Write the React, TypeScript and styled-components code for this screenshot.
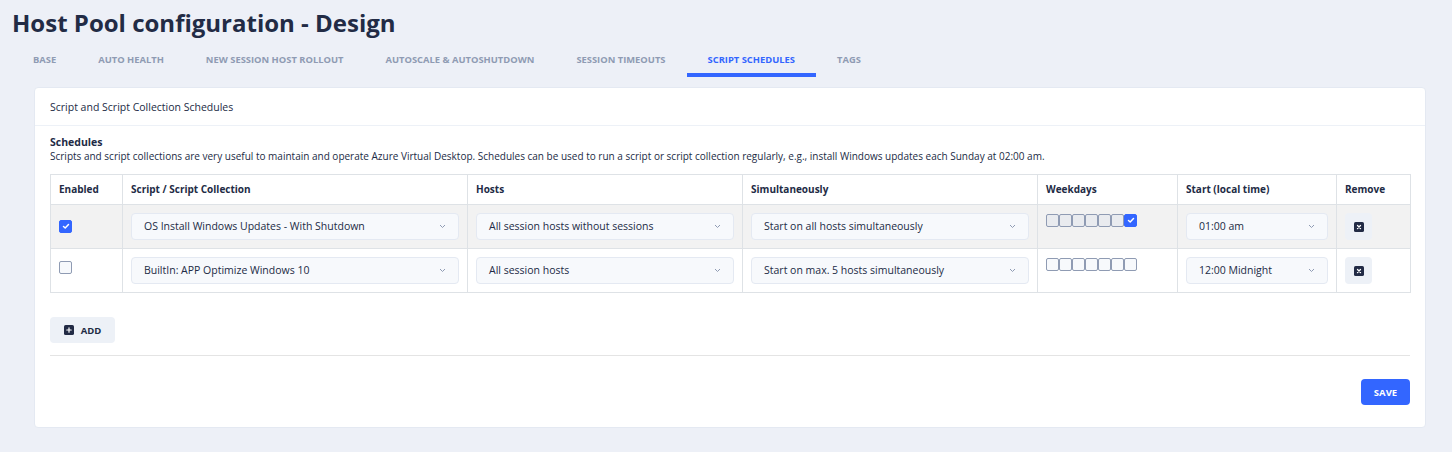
import React from "react";
import styled, { createGlobalStyle } from "styled-components";

const Global = createGlobalStyle`
  html, body { margin: 0; padding: 0; background: #edf0f7; }
  body { font-family: "Open Sans", "Noto Sans", sans-serif; color: #222b45; }
  * { box-sizing: border-box; }
`;

const Page = styled.div`
  width: 1452px;
  height: 452px;
  padding: 8px 26px 0 12px;
  background: #edf0f7;
`;

const Title = styled.h1`
  margin: 0;
  font-size: 24px;
  line-height: 30px;
  font-weight: 700;
  color: #222b45;
  letter-spacing: 0;
`;

const Tabs = styled.nav`
  display: flex;
  margin-top: 6px;
  height: 33px;
`;

const Tab = styled.div<{ $active?: boolean }>`
  padding: 0 21px;
  display: flex;
  align-items: center;
  font-size: 9.4px;
  font-weight: 700;
  text-transform: uppercase;
  color: ${(p) => (p.$active ? "#3366ff" : "#8f9bb3")};
  border-bottom: 4px solid ${(p) => (p.$active ? "#3366ff" : "transparent")};
  padding-top: 1px;
`;

const Card = styled.section`
  margin: 10px 0 0 22px;
  background: #fff;
  border: 1px solid #e4e9f2;
  border-radius: 4px;
  height: 341px;
`;

const CardHeader = styled.header`
  height: 38px;
  padding: 0 15px;
  display: flex;
  align-items: center;
  font-size: 10.5px;
  border-bottom: 1px solid #edf1f7;
`;

const CardBody = styled.div`
  padding: 9px 15px 0 15px;
`;

const SectionTitle = styled.div`
  font-size: 10.5px;
  font-weight: 700;
  line-height: 14px;
`;

const Description = styled.p`
  margin: 0;
  font-size: 10px;
  line-height: 14px;
`;

const Table = styled.table`
  margin-top: 11px;
  width: 1360px;
  border-collapse: collapse;
  table-layout: fixed;
`;

const Th = styled.th<{ $w: number }>`
  width: ${(p) => p.$w}px;
  height: 30px;
  padding: 0 8px 2px 8px;
  border: 1px solid #dee2e6;
  text-align: left;
  font-size: 10px;
  font-weight: 700;
  color: #222b45;
`;

const Tr = styled.tr<{ $striped?: boolean }>`
  background: ${(p) => (p.$striped ? "#f2f2f2" : "#fff")};
`;

const Td = styled.td`
  height: 44px;
  padding: 8px;
  border: 1px solid #dee2e6;
  vertical-align: top;
`;

const SelectBox = styled.div`
  height: 27px;
  padding: 0 12px 1px 12px;
  display: flex;
  align-items: center;
  justify-content: space-between;
  background: #f7f9fc;
  border: 1px solid #e4e9f2;
  border-radius: 4px;
  font-size: 10.5px;
  color: #222b45;
`;

const Check = styled.span<{ $on?: boolean; $row?: boolean }>`
  display: inline-flex;
  align-items: center;
  justify-content: center;
  width: 13px;
  height: 13px;
  border-radius: 2px;
  border: 1px solid ${(p) => (p.$on ? "#3366ff" : "#8f9bb3")};
  background: ${(p) => (p.$on ? "#3366ff" : p.$row ? "#e9ebef" : "#f7f9fc")};
  margin-top: 1px;
`;

const DayRow = styled.div`
  display: flex;
`;

const IconButton = styled.button`
  width: 27px;
  height: 27px;
  border: none;
  border-radius: 4px;
  background: #edf1f7;
  display: flex;
  align-items: center;
  justify-content: center;
  padding: 0;
`;

const Footer = styled.div`
  padding-top: 24px;
`;

const AddButton = styled.button`
  height: 26px;
  width: 65px;
  border: none;
  border-radius: 4px;
  background: #edf1f7;
  display: flex;
  align-items: center;
  justify-content: center;
  gap: 7px;
  font-family: inherit;
  font-size: 9.5px;
  font-weight: 700;
  color: #222b45;
  padding: 0;
`;

const Divider = styled.hr`
  margin: 12px 0 0 0;
  border: none;
  border-top: 1px solid #e4e4e4;
`;

const Actions = styled.div`
  display: flex;
  justify-content: flex-end;
  padding-top: 23px;
`;

const SaveButton = styled.button`
  height: 26px;
  width: 49px;
  border: none;
  border-radius: 4px;
  background: #3366ff;
  color: #fff;
  font-family: inherit;
  font-size: 9.5px;
  font-weight: 700;
  padding: 0;
`;

const Chevron = () => (
  <svg width="7" height="5" viewBox="0 0 7 5">
    <polyline points="1,1 3.5,3.5 6,1" fill="none" stroke="#8f9bb3" strokeWidth="1" />
  </svg>
);

const Tick = () => (
  <svg width="8" height="7" viewBox="0 0 8 7">
    <polyline points="1.5,3.5 3.2,5 6.5,1.5" fill="none" stroke="#fff" strokeWidth="1.5" strokeLinecap="round" strokeLinejoin="round" />
  </svg>
);

const CloseSquare = () => (
  <svg width="10" height="10" viewBox="0 0 10 10">
    <rect x="0" y="0" width="10" height="10" rx="1.6" fill="#222b45" />
    <path d="M3.5 3.5 L6.5 6.5 M6.5 3.5 L3.5 6.5" stroke="#fff" strokeWidth="1.3" strokeLinecap="round" />
  </svg>
);

const PlusSquare = () => (
  <svg width="10" height="10" viewBox="0 0 10 10">
    <rect x="0" y="0" width="10" height="10" rx="1.6" fill="#222b45" />
    <path d="M5 2.8 V7.2 M2.8 5 H7.2" stroke="#fff" strokeWidth="1.2" strokeLinecap="round" />
  </svg>
);

const Select = ({ value }: { value: string }) => (
  <SelectBox>
    <span>{value}</span>
    <Chevron />
  </SelectBox>
);

type Row = {
  enabled: boolean;
  script: string;
  hosts: string;
  simul: string;
  days: boolean[];
  start: string;
};

const rows: Row[] = [
  {
    enabled: true,
    script: "OS Install Windows Updates - With Shutdown",
    hosts: "All session hosts without sessions",
    simul: "Start on all hosts simultaneously",
    days: [false, false, false, false, false, false, true],
    start: "01:00 am",
  },
  {
    enabled: false,
    script: "BuiltIn: APP Optimize Windows 10",
    hosts: "All session hosts",
    simul: "Start on max. 5 hosts simultaneously",
    days: [false, false, false, false, false, false, false],
    start: "12:00 Midnight",
  },
];

const tabs = [
  "Base",
  "Auto Health",
  "New Session Host Rollout",
  "Autoscale & Autoshutdown",
  "Session Timeouts",
  "Script Schedules",
  "Tags",
];

export default function App() {
  return (
    <Page>
      <Global />
      <Title>Host Pool configuration - Design</Title>
      <Tabs>
        {tabs.map((t) => (
          <Tab key={t} $active={t === "Script Schedules"}>
            {t}
          </Tab>
        ))}
      </Tabs>
      <Card>
        <CardHeader>Script and Script Collection Schedules</CardHeader>
        <CardBody>
          <SectionTitle>Schedules</SectionTitle>
          <Description>
            Scripts and script collections are very useful to maintain and operate Azure Virtual Desktop. Schedules can be used to run a script or script collection regularly, e.g., install Windows updates each Sunday at 02:00 am.
          </Description>
          <Table>
            <thead>
              <tr>
                <Th $w={72}>Enabled</Th>
                <Th $w={345}>Script / Script Collection</Th>
                <Th $w={275}>Hosts</Th>
                <Th $w={295}>Simultaneously</Th>
                <Th $w={140}>Weekdays</Th>
                <Th $w={159}>Start (local time)</Th>
                <Th $w={74}>Remove</Th>
              </tr>
            </thead>
            <tbody>
              {rows.map((r, i) => (
                <Tr key={i} $striped={i % 2 === 0}>
                  <Td>
                    <Check $on={r.enabled}>{r.enabled && <Tick />}</Check>
                  </Td>
                  <Td>
                    <Select value={r.script} />
                  </Td>
                  <Td>
                    <Select value={r.hosts} />
                  </Td>
                  <Td>
                    <Select value={r.simul} />
                  </Td>
                  <Td>
                    <DayRow>
                      {r.days.map((d, j) => (
                        <Check key={j} $on={d} $row={i % 2 === 0}>
                          {d && <Tick />}
                        </Check>
                      ))}
                    </DayRow>
                  </Td>
                  <Td>
                    <Select value={r.start} />
                  </Td>
                  <Td>
                    <IconButton aria-label="Remove">
                      <CloseSquare />
                    </IconButton>
                  </Td>
                </Tr>
              ))}
            </tbody>
          </Table>
          <Footer>
            <AddButton>
              <PlusSquare />
              ADD
            </AddButton>
          </Footer>
          <Divider />
          <Actions>
            <SaveButton>SAVE</SaveButton>
          </Actions>
        </CardBody>
      </Card>
    </Page>
  );
}
